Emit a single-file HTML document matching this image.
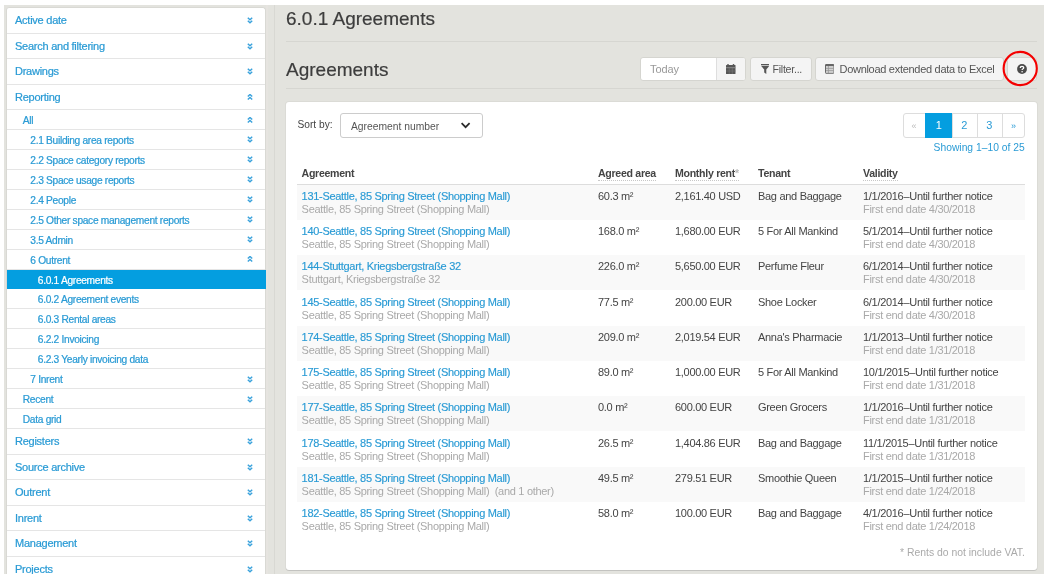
<!DOCTYPE html>
<html><head><meta charset="utf-8">
<style>
*{box-sizing:border-box;margin:0;padding:0}
html,body{width:1048px;height:580px;overflow:hidden;background:#fff;font-family:"Liberation Sans",sans-serif}
.abs{position:absolute}
#app{position:absolute;left:4px;top:5px;width:1040px;height:569px;background:#e3e3de}
#side{position:absolute;left:6px;top:7px;width:260px;height:567px;background:#fff;border:1px solid #d9d9d4;border-bottom:none;border-radius:3px 3px 0 0;clip-path:inset(0 round 3px 3px 0 0)}
.r{position:relative;border-bottom:1px solid #e5e5e5;color:#2a9bd5;white-space:nowrap;-webkit-text-stroke:0.22px currentColor}
.t{height:25.5px;font-size:11px;line-height:24px;letter-spacing:-0.25px}
.s{height:19.94px;font-size:10.2px;line-height:21px;letter-spacing:-0.3px}
.l0{padding-left:8px}
.l1{padding-left:15.8px}
.l2{padding-left:23.3px}
.l3{padding-left:30.8px}
.act{background:#049ee0;color:#fff;border-bottom-color:#049ee0;margin-right:-1px}
.ch{position:absolute;left:240px;width:6px;height:7px}
.t .ch{top:9px}
.s .ch{top:6.5px}
#vline{position:absolute;left:274px;top:5px;width:1px;height:569px;background:#d8d8d3}
h1{position:absolute;left:286px;top:7px;font-size:19px;font-weight:normal;color:#3d3d3d;line-height:24px;white-space:nowrap;-webkit-text-stroke:0.2px #3d3d3d}
h2{position:absolute;left:286px;top:58px;font-size:19px;font-weight:normal;color:#3d3d3d;line-height:24px;white-space:nowrap;-webkit-text-stroke:0.2px #3d3d3d}
.hr{position:absolute;left:286px;width:751px;height:1px;background:#d6d6d1}
.btn{position:absolute;top:57px;height:24px;background:#f4f4f4;border:1px solid #d5d5d0;border-radius:3px;font-size:10.4px;color:#555;line-height:21px;white-space:nowrap}
#card{position:absolute;left:286px;top:102px;width:751px;height:468px;background:#fff;border-radius:3px;box-shadow:0 0 0 1px rgba(0,0,0,.035),0 1px 0 rgba(0,0,0,.1)}
table{position:absolute;left:297px;top:160px;width:728px;table-layout:fixed;border-collapse:collapse;font-size:11px;letter-spacing:-0.3px;color:#444}
th{height:24.5px;text-align:left;font-weight:bold;font-size:10.6px;color:#444;padding:2px 0 0 4px;vertical-align:middle;border-bottom:1px solid #ddd;white-space:nowrap}
td{height:35.25px;padding:0 0 0 4px;vertical-align:top;white-space:nowrap;line-height:13px;padding-top:5.3px}
tr.g td{background:#f9f9f9}
a{color:#2a9bd5;text-decoration:none;-webkit-text-stroke:0.15px #2a9bd5}
.sub{color:#a9a9a9}
td:first-child,th:first-child{padding-left:4.6px}
.pg{top:113px;height:24.5px;line-height:24.5px;text-align:center;font-size:11px}
.dot{border-bottom:1px dotted #c8c8c8;padding-bottom:1px}
</style></head><body><div id="wrap" style="will-change:transform;position:absolute;left:0;top:0;width:1048px;height:580px;overflow:hidden">
<div id="app"></div>
<div id="side">
<div class="r t l0">Active date<svg class="ch" viewBox="0 0 6 7"><path d="M0.8 0.8L3 2.8L5.2 0.8M0.8 3.8L3 5.8L5.2 3.8" fill="none" stroke="#3aa2dc" stroke-width="1.45"/></svg></div>
<div class="r t l0">Search and filtering<svg class="ch" viewBox="0 0 6 7"><path d="M0.8 0.8L3 2.8L5.2 0.8M0.8 3.8L3 5.8L5.2 3.8" fill="none" stroke="#3aa2dc" stroke-width="1.45"/></svg></div>
<div class="r t l0">Drawings<svg class="ch" viewBox="0 0 6 7"><path d="M0.8 0.8L3 2.8L5.2 0.8M0.8 3.8L3 5.8L5.2 3.8" fill="none" stroke="#3aa2dc" stroke-width="1.45"/></svg></div>
<div class="r t l0">Reporting<svg class="ch" viewBox="0 0 6 7"><path d="M0.8 2.5L3 0.5L5.2 2.5M0.8 5.5L3 3.5L5.2 5.5" fill="none" stroke="#3aa2dc" stroke-width="1.45"/></svg></div>
<div class="r s l1">All<svg class="ch" viewBox="0 0 6 7"><path d="M0.8 2.5L3 0.5L5.2 2.5M0.8 5.5L3 3.5L5.2 5.5" fill="none" stroke="#3aa2dc" stroke-width="1.45"/></svg></div>
<div class="r s l2">2.1 Building area reports<svg class="ch" viewBox="0 0 6 7"><path d="M0.8 0.8L3 2.8L5.2 0.8M0.8 3.8L3 5.8L5.2 3.8" fill="none" stroke="#3aa2dc" stroke-width="1.45"/></svg></div>
<div class="r s l2">2.2 Space category reports<svg class="ch" viewBox="0 0 6 7"><path d="M0.8 0.8L3 2.8L5.2 0.8M0.8 3.8L3 5.8L5.2 3.8" fill="none" stroke="#3aa2dc" stroke-width="1.45"/></svg></div>
<div class="r s l2">2.3 Space usage reports<svg class="ch" viewBox="0 0 6 7"><path d="M0.8 0.8L3 2.8L5.2 0.8M0.8 3.8L3 5.8L5.2 3.8" fill="none" stroke="#3aa2dc" stroke-width="1.45"/></svg></div>
<div class="r s l2">2.4 People<svg class="ch" viewBox="0 0 6 7"><path d="M0.8 0.8L3 2.8L5.2 0.8M0.8 3.8L3 5.8L5.2 3.8" fill="none" stroke="#3aa2dc" stroke-width="1.45"/></svg></div>
<div class="r s l2">2.5 Other space management reports<svg class="ch" viewBox="0 0 6 7"><path d="M0.8 0.8L3 2.8L5.2 0.8M0.8 3.8L3 5.8L5.2 3.8" fill="none" stroke="#3aa2dc" stroke-width="1.45"/></svg></div>
<div class="r s l2">3.5 Admin<svg class="ch" viewBox="0 0 6 7"><path d="M0.8 0.8L3 2.8L5.2 0.8M0.8 3.8L3 5.8L5.2 3.8" fill="none" stroke="#3aa2dc" stroke-width="1.45"/></svg></div>
<div class="r s l2">6 Outrent<svg class="ch" viewBox="0 0 6 7"><path d="M0.8 2.5L3 0.5L5.2 2.5M0.8 5.5L3 3.5L5.2 5.5" fill="none" stroke="#3aa2dc" stroke-width="1.45"/></svg></div>
<div class="r s l3 act">6.0.1 Agreements</div>
<div class="r s l3">6.0.2 Agreement events</div>
<div class="r s l3">6.0.3 Rental areas</div>
<div class="r s l3">6.2.2 Invoicing</div>
<div class="r s l3">6.2.3 Yearly invoicing data</div>
<div class="r s l2">7 Inrent<svg class="ch" viewBox="0 0 6 7"><path d="M0.8 0.8L3 2.8L5.2 0.8M0.8 3.8L3 5.8L5.2 3.8" fill="none" stroke="#3aa2dc" stroke-width="1.45"/></svg></div>
<div class="r s l1">Recent<svg class="ch" viewBox="0 0 6 7"><path d="M0.8 0.8L3 2.8L5.2 0.8M0.8 3.8L3 5.8L5.2 3.8" fill="none" stroke="#3aa2dc" stroke-width="1.45"/></svg></div>
<div class="r s l1">Data grid</div>
<div class="r t l0">Registers<svg class="ch" viewBox="0 0 6 7"><path d="M0.8 0.8L3 2.8L5.2 0.8M0.8 3.8L3 5.8L5.2 3.8" fill="none" stroke="#3aa2dc" stroke-width="1.45"/></svg></div>
<div class="r t l0">Source archive<svg class="ch" viewBox="0 0 6 7"><path d="M0.8 0.8L3 2.8L5.2 0.8M0.8 3.8L3 5.8L5.2 3.8" fill="none" stroke="#3aa2dc" stroke-width="1.45"/></svg></div>
<div class="r t l0">Outrent<svg class="ch" viewBox="0 0 6 7"><path d="M0.8 0.8L3 2.8L5.2 0.8M0.8 3.8L3 5.8L5.2 3.8" fill="none" stroke="#3aa2dc" stroke-width="1.45"/></svg></div>
<div class="r t l0">Inrent<svg class="ch" viewBox="0 0 6 7"><path d="M0.8 0.8L3 2.8L5.2 0.8M0.8 3.8L3 5.8L5.2 3.8" fill="none" stroke="#3aa2dc" stroke-width="1.45"/></svg></div>
<div class="r t l0">Management<svg class="ch" viewBox="0 0 6 7"><path d="M0.8 0.8L3 2.8L5.2 0.8M0.8 3.8L3 5.8L5.2 3.8" fill="none" stroke="#3aa2dc" stroke-width="1.45"/></svg></div>
<div class="r t l0">Projects<svg class="ch" viewBox="0 0 6 7"><path d="M0.8 0.8L3 2.8L5.2 0.8M0.8 3.8L3 5.8L5.2 3.8" fill="none" stroke="#3aa2dc" stroke-width="1.45"/></svg></div>
</div>
<div id="vline"></div>
<div class="abs" style="left:266px;top:5px;width:2px;height:569px;background:#e6e4e0"></div>
<h1>6.0.1 Agreements</h1>
<div class="hr" style="top:41px"></div>
<h2>Agreements</h2>
<div class="hr" style="top:88px"></div>
<!-- toolbar -->
<div class="btn" style="left:640px;width:106px;background:#fff"></div>
<div class="abs" style="left:650px;top:57px;line-height:25px;font-size:11px;letter-spacing:-0.1px;color:#999">Today</div>
<div class="abs" style="left:716px;top:58px;width:29px;height:22px;background:#f4f4f4;border-left:1px solid #dedede;border-radius:0 2px 2px 0"></div>
<div class="btn" style="left:750px;width:62px"></div>
<div class="btn" style="left:815px;width:189px"></div>
<div class="abs" style="left:772.5px;top:57px;line-height:25px;font-size:10.6px;letter-spacing:-0.25px;color:#555">Filter...</div>
<div class="abs" style="left:839.5px;top:57px;line-height:25px;font-size:11px;letter-spacing:-0.29px;color:#555">Download extended data to Excel</div>
<div class="btn" style="left:1007px;width:30px"></div>
<div id="card"></div>
<!-- sort -->
<div class="abs" style="left:297.5px;top:113px;line-height:23px;font-size:10.2px;color:#444">Sort by:</div>
<div class="abs" style="left:339.5px;top:113px;width:143px;height:24.5px;border:1px solid #ccc;border-radius:3px;background:#fff"></div>
<div class="abs" style="left:351px;top:115px;line-height:24px;font-size:10.3px;color:#555">Agreement number</div>
<!-- pagination -->
<div class="abs" style="left:902.5px;top:113px;width:122.5px;height:24.5px;border:1px solid #ddd;border-radius:3px;background:#fff"></div>
<div class="abs" style="left:925px;top:113px;width:27px;height:24.5px;background:#049ee0"></div>
<div class="abs" style="left:933.6px;top:140px;line-height:16px;font-size:10.3px;color:#2a9bd5">Showing 1–10 of 25</div>

<!-- calendar icon -->
<svg class="abs" style="left:726px;top:64px" width="9.5" height="10" viewBox="0 0 9.5 10"><rect x="0" y="1" width="9.5" height="9" rx="0.5" fill="#555"/><rect x="1.2" y="0" width="1.6" height="1.5" rx="0.6" fill="#555"/><rect x="6.7" y="0" width="1.6" height="1.5" rx="0.6" fill="#555"/><path d="M0 3.7H9.5" stroke="#9a9a9a" stroke-width="0.8"/><path d="M3.2 4.2V10M6.3 4.2V10M0 7H9.5" stroke="#7a7a7a" stroke-width="0.6"/></svg>
<!-- filter icon -->
<svg class="abs" style="left:760.5px;top:64px" width="8.5" height="10" viewBox="0 0 8.5 10"><rect x="0" y="0" width="8.5" height="1.1" fill="#555"/><path d="M0 1.8H8.5L5.3 5.4V9.9L3.2 8.5V5.4Z" fill="#555"/></svg>
<!-- table icon -->
<svg class="abs" style="left:825px;top:64px" width="9.4" height="9.8" viewBox="0 0 9.4 9.8"><rect x="0.5" y="0.5" width="8.4" height="8.8" rx="0.5" fill="#f4f4f4" stroke="#666" stroke-width="1"/><rect x="0.5" y="0.5" width="8.4" height="1.6" fill="#666"/><path d="M1 4.4H8.4M1 6.6H8.4M3.4 2V9" stroke="#888" stroke-width="0.8"/><rect x="1" y="2.2" width="7.4" height="6.6" fill="#aaa" opacity="0.45"/></svg>
<!-- help icon -->
<svg class="abs" style="left:1017px;top:63.8px" width="10" height="10" viewBox="0 0 10 10"><circle cx="5" cy="5" r="4.9" fill="#4a4a4a"/><path d="M3.3 3.9Q3.3 2.3 5 2.3Q6.7 2.3 6.7 3.7Q6.7 4.5 5.7 5Q5.1 5.3 5.1 6" fill="none" stroke="#fff" stroke-width="1.3"/><circle cx="5.1" cy="7.7" r="0.8" fill="#fff"/></svg>
<!-- red circle -->
<svg class="abs" style="left:1002px;top:50px" width="37" height="37" viewBox="0 0 37 37"><circle cx="18.2" cy="18.5" r="16.6" fill="none" stroke="#f40000" stroke-width="2.1"/></svg>
<!-- select chevron -->
<svg class="abs" style="left:460px;top:121px" width="11" height="9" viewBox="0 0 11 9"><path d="M1.6 2.2L5.6 6.2L9.6 2.2" fill="none" stroke="#2a2a2a" stroke-width="1.75"/></svg>
<!-- pagination -->
<div class="abs" style="left:951.5px;top:113px;width:1px;height:24.5px;background:#ddd"></div>
<div class="abs" style="left:976.5px;top:113px;width:1px;height:24.5px;background:#ddd"></div>
<div class="abs" style="left:1001.5px;top:113px;width:1px;height:24.5px;background:#ddd"></div>
<div class="abs pg" style="left:902.5px;width:23px;color:#bbb;font-size:9px;top:114px">«</div>
<div class="abs pg" style="left:925.5px;width:26.5px;color:#fff">1</div>
<div class="abs pg" style="left:952px;width:24.5px;color:#2a9bd5">2</div>
<div class="abs pg" style="left:977px;width:24.5px;color:#2a9bd5">3</div>
<div class="abs pg" style="left:1002px;width:23px;color:#2a9bd5;font-size:9px;top:114px">»</div>
<table>
<colgroup><col style="width:297px"><col style="width:77px"><col style="width:83px"><col style="width:105px"><col style="width:166px"></colgroup>
<tr><th>Agreement</th><th><span class="dot">Agreed area</span></th><th><span class="dot">Monthly rent<span style="color:#bbb">*</span></span></th><th>Tenant</th><th><span class="dot">Validity</span></th></tr>
<tr class="g"><td><a>131-Seattle, 85 Spring Street (Shopping Mall)</a><br><span class="sub">Seattle, 85 Spring Street (Shopping Mall)</span></td><td>60.3 m²</td><td>2,161.40 USD</td><td>Bag and Baggage</td><td>1/1/2016–Until further notice<br><span class="sub">First end date 4/30/2018</span></td></tr>
<tr><td><a>140-Seattle, 85 Spring Street (Shopping Mall)</a><br><span class="sub">Seattle, 85 Spring Street (Shopping Mall)</span></td><td>168.0 m²</td><td>1,680.00 EUR</td><td>5 For All Mankind</td><td>5/1/2014–Until further notice<br><span class="sub">First end date 4/30/2018</span></td></tr>
<tr class="g"><td><a>144-Stuttgart, Kriegsbergstraße 32</a><br><span class="sub">Stuttgart, Kriegsbergstraße 32</span></td><td>226.0 m²</td><td>5,650.00 EUR</td><td>Perfume Fleur</td><td>6/1/2014–Until further notice<br><span class="sub">First end date 4/30/2018</span></td></tr>
<tr><td><a>145-Seattle, 85 Spring Street (Shopping Mall)</a><br><span class="sub">Seattle, 85 Spring Street (Shopping Mall)</span></td><td>77.5 m²</td><td>200.00 EUR</td><td>Shoe Locker</td><td>6/1/2014–Until further notice<br><span class="sub">First end date 4/30/2018</span></td></tr>
<tr class="g"><td><a>174-Seattle, 85 Spring Street (Shopping Mall)</a><br><span class="sub">Seattle, 85 Spring Street (Shopping Mall)</span></td><td>209.0 m²</td><td>2,019.54 EUR</td><td>Anna's Pharmacie</td><td>1/1/2013–Until further notice<br><span class="sub">First end date 1/31/2018</span></td></tr>
<tr><td><a>175-Seattle, 85 Spring Street (Shopping Mall)</a><br><span class="sub">Seattle, 85 Spring Street (Shopping Mall)</span></td><td>89.0 m²</td><td>1,000.00 EUR</td><td>5 For All Mankind</td><td>10/1/2015–Until further notice<br><span class="sub">First end date 1/31/2018</span></td></tr>
<tr class="g"><td><a>177-Seattle, 85 Spring Street (Shopping Mall)</a><br><span class="sub">Seattle, 85 Spring Street (Shopping Mall)</span></td><td>0.0 m²</td><td>600.00 EUR</td><td>Green Grocers</td><td>1/1/2016–Until further notice<br><span class="sub">First end date 1/31/2018</span></td></tr>
<tr><td><a>178-Seattle, 85 Spring Street (Shopping Mall)</a><br><span class="sub">Seattle, 85 Spring Street (Shopping Mall)</span></td><td>26.5 m²</td><td>1,404.86 EUR</td><td>Bag and Baggage</td><td>11/1/2015–Until further notice<br><span class="sub">First end date 1/31/2018</span></td></tr>
<tr class="g"><td><a>181-Seattle, 85 Spring Street (Shopping Mall)</a><br><span class="sub">Seattle, 85 Spring Street (Shopping Mall)&nbsp; (and 1 other)</span></td><td>49.5 m²</td><td>279.51 EUR</td><td>Smoothie Queen</td><td>1/1/2015–Until further notice<br><span class="sub">First end date 1/24/2018</span></td></tr>
<tr><td><a>182-Seattle, 85 Spring Street (Shopping Mall)</a><br><span class="sub">Seattle, 85 Spring Street (Shopping Mall)</span></td><td>58.0 m²</td><td>100.00 EUR</td><td>Bag and Baggage</td><td>4/1/2016–Until further notice<br><span class="sub">First end date 1/24/2018</span></td></tr>
</table>
<div class="abs" style="left:900px;top:544.5px;line-height:16px;font-size:10.4px;color:#aaa">* Rents do not include VAT.</div>
</div></body></html>
